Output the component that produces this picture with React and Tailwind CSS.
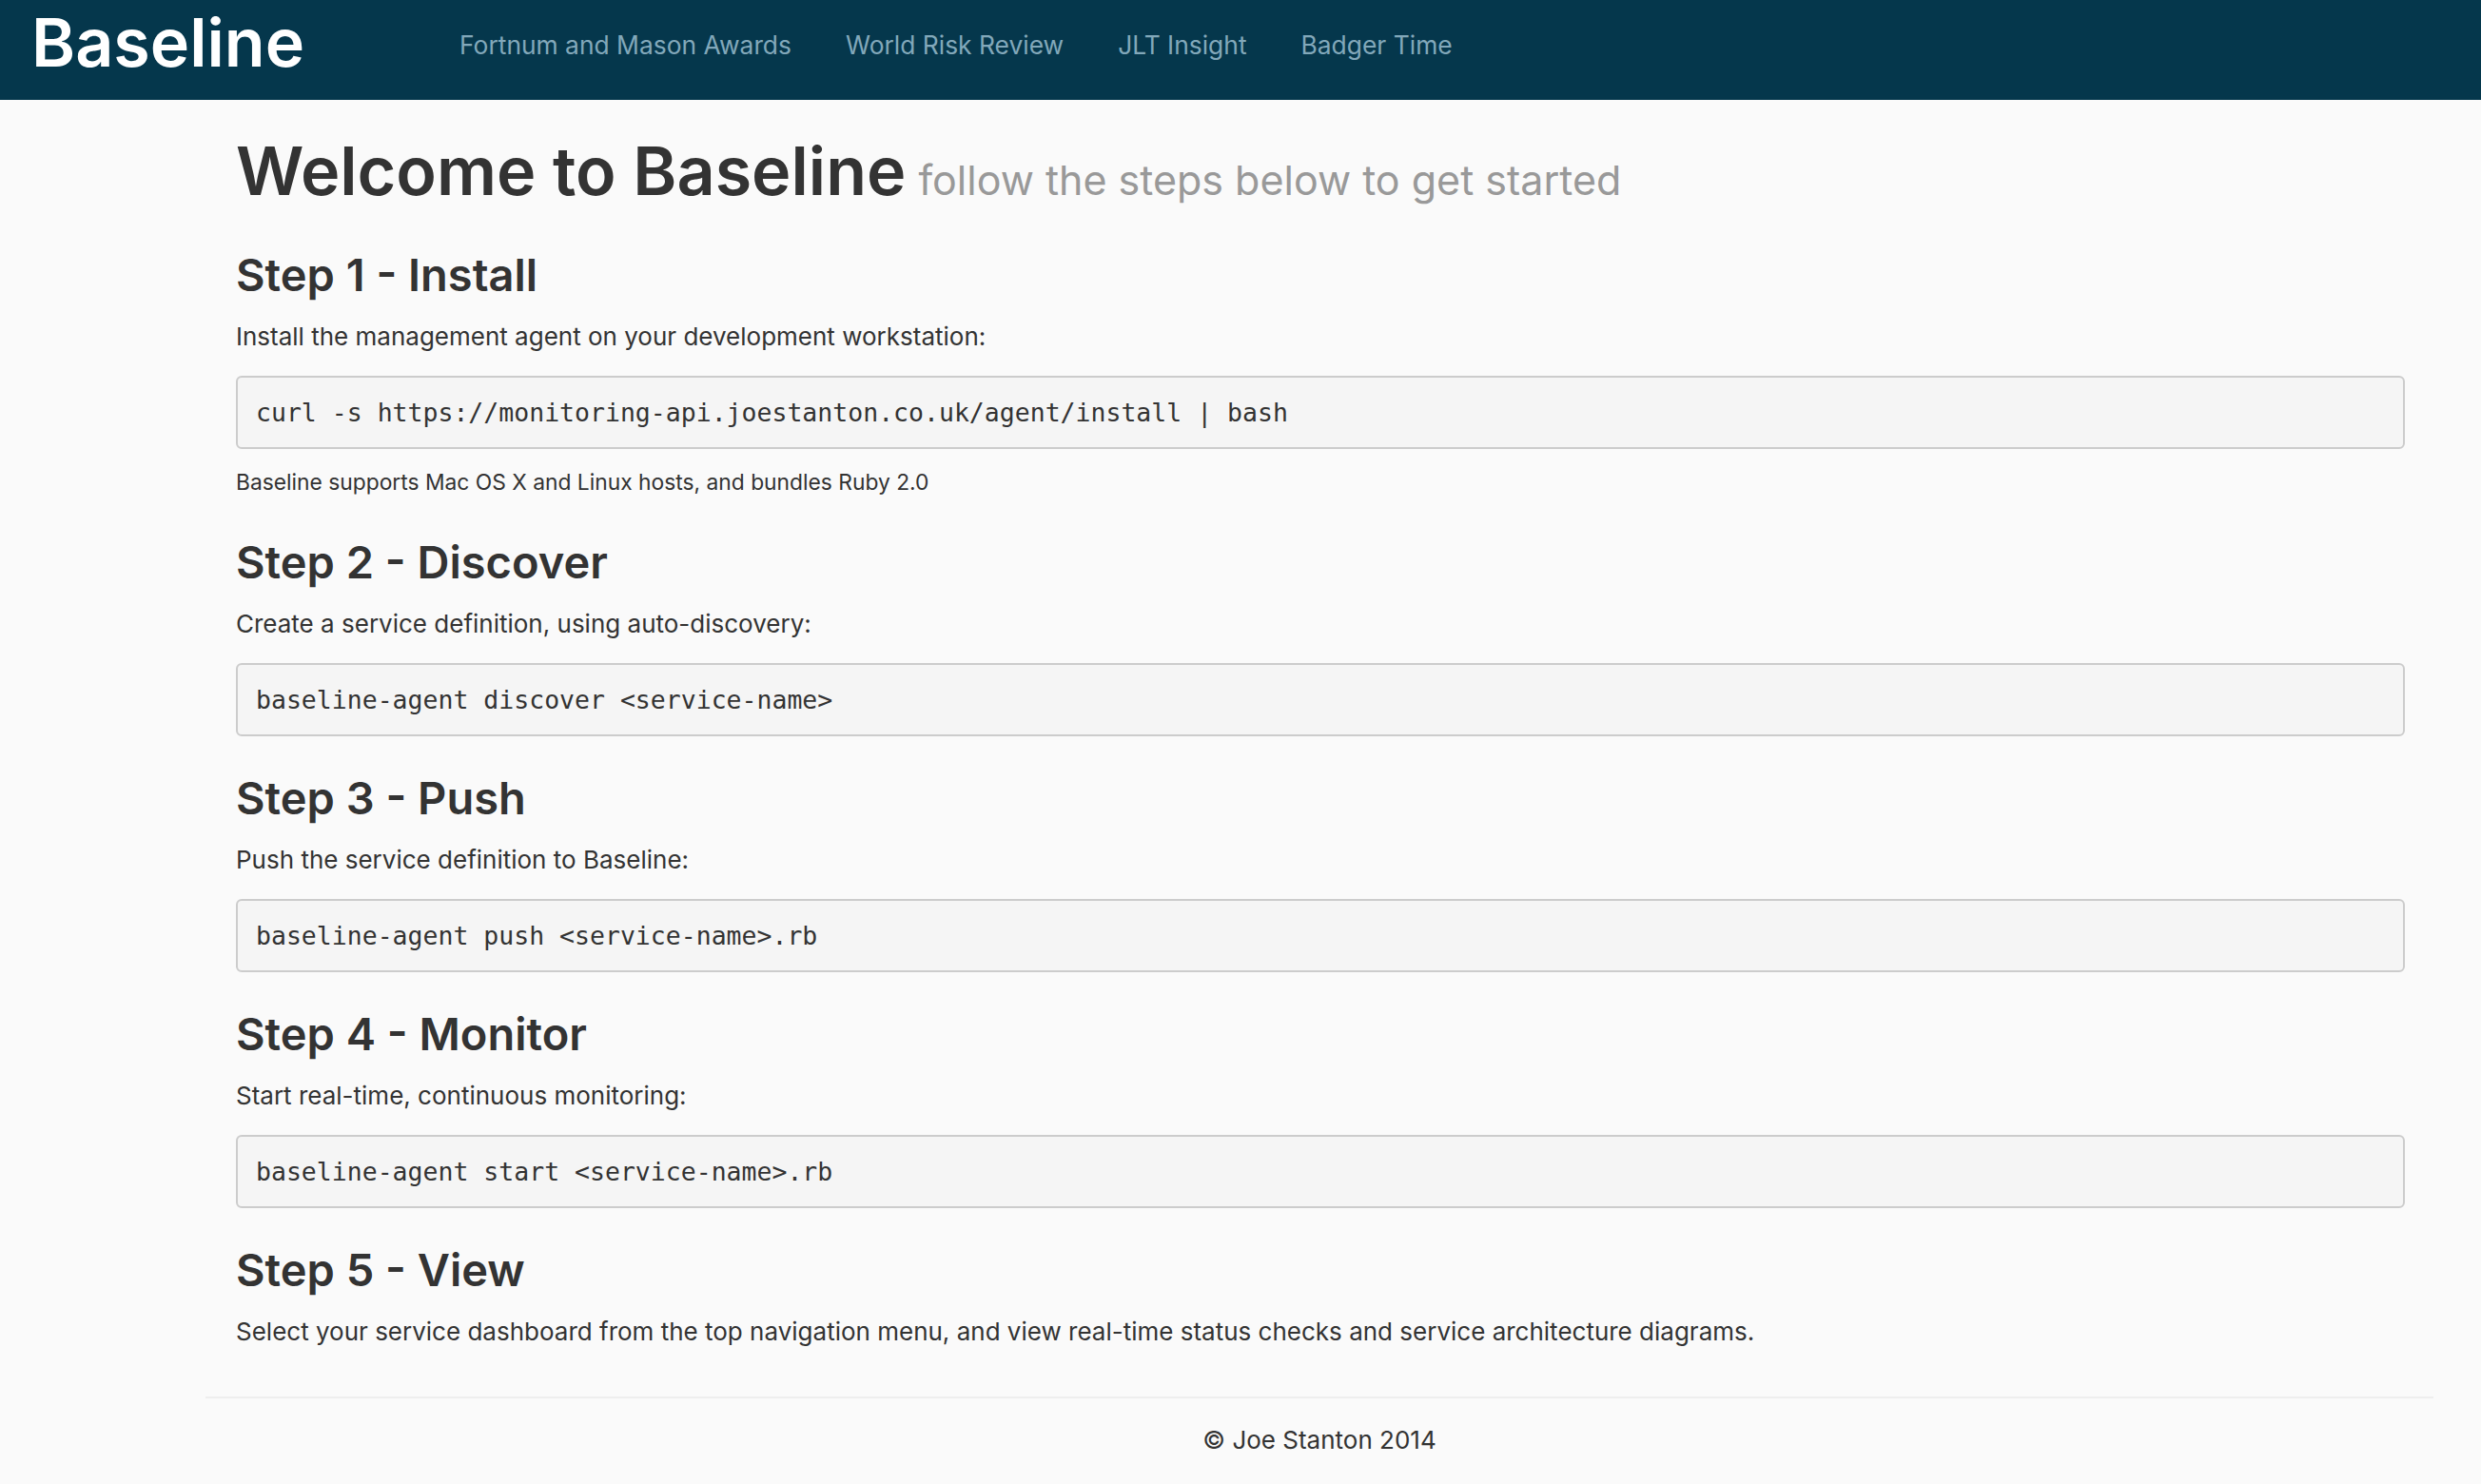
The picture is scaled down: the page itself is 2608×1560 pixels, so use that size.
import React from 'react';

const navLinks = ['Fortnum and Mason Awards', 'World Risk Review', 'JLT Insight', 'Badger Time'];

const steps = [
  {
    title: 'Step 1 - Install',
    text: 'Install the management agent on your development workstation:',
    code: 'curl -s https://monitoring-api.joestanton.co.uk/agent/install | bash',
    note: 'Baseline supports Mac OS X and Linux hosts, and bundles Ruby 2.0',
  },
  {
    title: 'Step 2 - Discover',
    text: 'Create a service definition, using auto-discovery:',
    code: 'baseline-agent discover <service-name>',
  },
  {
    title: 'Step 3 - Push',
    text: 'Push the service definition to Baseline:',
    code: 'baseline-agent push <service-name>.rb',
  },
  {
    title: 'Step 4 - Monitor',
    text: 'Start real-time, continuous monitoring:',
    code: 'baseline-agent start <service-name>.rb',
  },
  {
    title: 'Step 5 - View',
    text: 'Select your service dashboard from the top navigation menu, and view real-time status checks and service architecture diagrams.',
  },
];

// spacing above each heading depends on what came before it
const headingTop = ['mt-[30px]', 'mt-[39px]', 'mt-[35px]', 'mt-[35px]', 'mt-[35px]'];

const Step = ({ step, index }) => (
  <section>
    <h2 className={`${headingTop[index]} text-[47px] leading-[60px] font-semibold text-[#333]`}>
      {step.title}
    </h2>
    <p className="mt-[17px] text-[26px] leading-[36px] text-[#333]">{step.text}</p>
    {step.code && (
      <pre className="mt-[23px] h-[77px] flex items-center bg-[#f5f5f5] border-2 border-[#cccccc] rounded-[6px] pl-[19px] font-['DejaVu_Sans_Mono',monospace] text-[26.5px] text-[#333]">
        {step.code}
      </pre>
    )}
    {step.note && (
      <p className="mt-[20px] text-[22.8px] leading-[30px] text-[#333]">{step.note}</p>
    )}
  </section>
);

const App = () => {
  return (
    <div className="min-h-screen bg-[#fafafa] font-['Inter','Lato',sans-serif]">
      <nav className="h-[105px] bg-[#05374c] flex items-center">
        <a className="ml-[33px] -mt-[16px] text-[70px] leading-none font-semibold text-white">Baseline</a>
        <ul className="ml-[163px] -mt-[10px] flex gap-[57px]">
          {navLinks.map((link) => (
            <li key={link} className="text-[26.4px] text-[#82a8ba]">{link}</li>
          ))}
        </ul>
      </nav>

      <div className="ml-[216px] w-[2342px]">
        <div className="pl-[32px] pr-[30px]">
          <h1 className="mt-[35px] leading-[80px] text-[70px] font-semibold text-[#333]">
            Welcome to Baseline<small className="ml-[13px] text-[43px] font-normal text-[#999]">follow the steps below to get started</small>
          </h1>
          {steps.map((step, i) => (
            <Step key={step.title} step={step} index={i} />
          ))}
        </div>
        <hr className="mt-[50px] border-0 border-t-2 border-[#eeeeee]" />
        <footer className="mt-[26px] pb-[10px] text-center text-[26px] leading-[36px] text-[#333]">
          © Joe Stanton 2014
        </footer>
      </div>
    </div>
  );
};

export default App;
